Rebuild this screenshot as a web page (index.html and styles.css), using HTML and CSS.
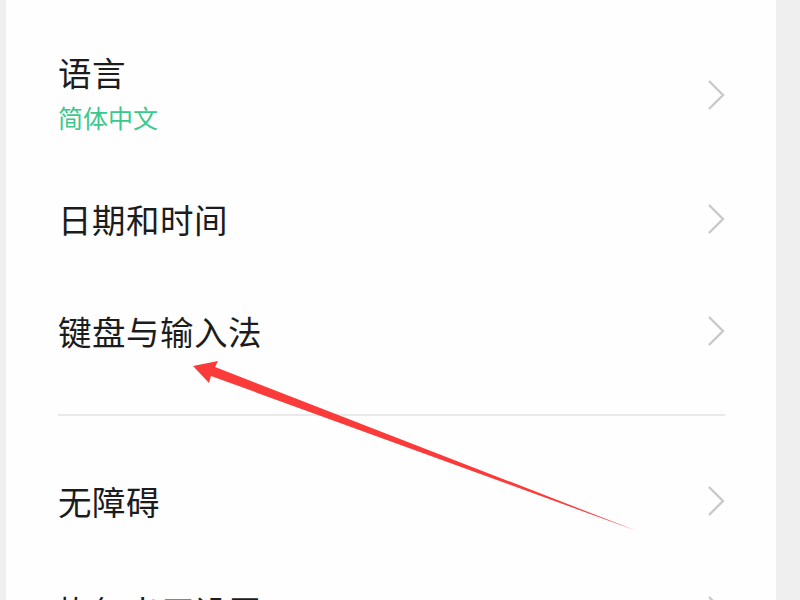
FILE: index.html
```html
<!DOCTYPE html>
<html lang="zh-CN">
<head>
  <meta charset="UTF-8"/>
  <meta name="viewport" content="width=device-width,initial-scale=1"/>
  <title>其他设置</title>
  <link rel="stylesheet" href="styles.css">
</head>
<body>
  <div class="page">
    <div class="card">
      <div class="row tall">
        <div class="text">
          <div class="title">语言</div>
          <div class="sub">简体中文</div>
        </div>
        <svg class="chev" viewBox="0 0 18 32"><path d="M2 2 L16 16 L2 30"/></svg>
      </div>
      <div class="row">
        <div class="title">日期和时间</div>
        <svg class="chev" viewBox="0 0 18 32"><path d="M2 2 L16 16 L2 30"/></svg>
      </div>
      <div class="row">
        <div class="title">键盘与输入法</div>
        <svg class="chev" viewBox="0 0 18 32"><path d="M2 2 L16 16 L2 30"/></svg>
      </div>
      <div class="divider"></div>
      <div class="row">
        <div class="title">无障碍</div>
        <svg class="chev" viewBox="0 0 18 32"><path d="M2 2 L16 16 L2 30"/></svg>
      </div>
      <div class="row last">
        <div class="title">恢复出厂设置</div>
        <svg class="chev" viewBox="0 0 18 32"><path d="M2 2 L16 16 L2 30"/></svg>
      </div>
    </div>

    <!-- 标注箭头 -->
    <svg class="arrow" viewBox="0 0 800 600">
      <polygon points="193,366 218,361 215,367 637,531 211,376 209,383"/>
    </svg>
  </div>
</body>
</html>
```

FILE: styles.css
```css
:root {
  --bg: #efefef;
  --card: #fefefe;
  --text: #1c1c1c;
  --green: #3cc88c;
  --line: #e9e9e9;
  --chev: #c9c9c9;
}
* { box-sizing: border-box; margin: 0; padding: 0 }
html, body { height: 100%; overflow: hidden }
body {
  background: var(--bg);
  font-family: "Noto Sans CJK SC", "Noto Sans", sans-serif;
  color: var(--text);
}
.page {
  position: relative;
  height: 600px;
  padding: 0 24px 0 6px;
}
.card {
  background: var(--card);
  height: 100%;
  padding: 27px 51px 0 52px;
}
.row {
  display: flex;
  align-items: center;
  justify-content: space-between;
  height: 112px;
}
.row.tall { height: 136px }
.row.last { height: 108px }
.title {
  font-size: 33.5px;
  line-height: 1.2;
  letter-spacing: 0.5px;
}
.tall .text { margin-top: -6px }
.sub {
  font-size: 25px;
  color: var(--green);
  margin-top: 9px;
  line-height: 1.2;
}
.chev {
  width: 18px;
  height: 32px;
  fill: none;
  stroke: var(--chev);
  stroke-width: 2.4;
}
.divider {
  height: 2px;
  background: var(--line);
  margin: 27px 0 29px;
}
.arrow {
  position: absolute;
  left: 0;
  top: 0;
  width: 800px;
  height: 600px;
  fill: #fb3a3a;
}
```
